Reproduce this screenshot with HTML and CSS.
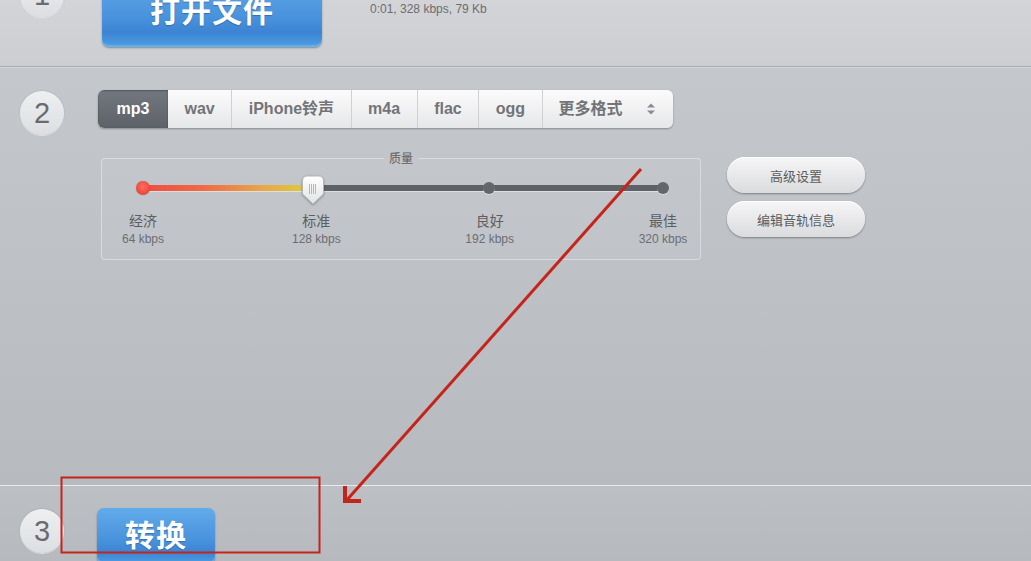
FILE: index.html
```html
<!DOCTYPE html>
<html lang="zh">
<head>
<meta charset="utf-8">
<title>音频转换器</title>
<link rel="stylesheet" href="styles.css">
</head>
<body>
<div class="page">
  <section class="sec sec1">
    <div class="row1">
      <div class="step">1</div>
      <button class="blue-btn open-btn">打开文件</button>
      <div class="info">0:01, 328 kbps, 79 Kb</div>
    </div>
  </section>

  <section class="sec sec2">
    <div class="step">2</div>
    <div class="content2">
      <div class="tabs">
        <div class="tab active">mp3</div>
        <div class="tab">wav</div>
        <div class="tab">iPhone铃声</div>
        <div class="tab">m4a</div>
        <div class="tab">flac</div>
        <div class="tab">ogg</div>
        <div class="tab more">更多格式
          <svg class="updown" width="10" height="14" viewBox="0 0 10 14"><path d="M1 5.5 L5 1.5 L9 5.5 Z M1 8.5 L5 12.5 L9 8.5 Z" fill="#8a8c90"/></svg>
        </div>
      </div>
      <div class="quality-row">
        <fieldset class="quality">
          <legend>质量</legend>
          <div class="slider">
            <div class="track"><div class="fill"></div></div>
            <span class="dot red" style="left:0%"></span>
            <span class="dot" style="left:66.5%"></span>
            <span class="dot" style="left:100%"></span>
            <svg class="thumb" style="left:170px" width="24" height="30" viewBox="0 0 24 30">
              <defs><linearGradient id="tg" x1="0" y1="0" x2="0" y2="1"><stop offset="0" stop-color="#ffffff"/><stop offset="1" stop-color="#e1e2e5"/></linearGradient></defs>
              <path d="M1.5 6 Q1.5 1 6.5 1 L17.5 1 Q22.5 1 22.5 6 L22.5 19 L12 29 L1.5 19 Z" fill="url(#tg)" stroke="#b4b6ba" stroke-width="1"/>
              <path d="M8.5 9 V19 M10.5 9 V19 M12.5 9 V19 M14.5 9 V19" stroke="#a6a8ac" stroke-width="0.8"/>
            </svg>
          </div>
          <div class="labels">
            <div class="lab"><div class="name">经济</div><div class="rate">64 kbps</div></div>
            <div class="lab"><div class="name">标准</div><div class="rate">128 kbps</div></div>
            <div class="lab"><div class="name">良好</div><div class="rate">192 kbps</div></div>
            <div class="lab"><div class="name">最佳</div><div class="rate">320 kbps</div></div>
          </div>
        </fieldset>
        <div class="side-btns">
          <button class="pill">高级设置</button>
          <button class="pill">编辑音轨信息</button>
        </div>
      </div>
    </div>
  </section>

  <section class="sec sec3">
    <div class="step">3</div>
    <button class="blue-btn convert-btn">转换</button>
  </section>

  <svg class="annot" width="1031" height="561" viewBox="0 0 1031 561">
    <line x1="641" y1="169" x2="346" y2="501" stroke="#c5241a" stroke-width="3"/>
    <polyline points="345,486 345,501 361,501" fill="none" stroke="#c5241a" stroke-width="4"/>
    <rect x="61.5" y="477.5" width="258" height="75" fill="none" stroke="#c5241a" stroke-width="2"/>
  </svg>
</div>
</body>
</html>
```

FILE: styles.css
```css
* { box-sizing: border-box; }
html, body { margin: 0; padding: 0; }
body {
  width: 1031px;
  height: 561px;
  overflow: hidden;
  font-family: "Liberation Sans", "Noto Sans CJK SC", sans-serif;
  background: #b8bbc0;
}
.page {
  position: relative;
  width: 1031px;
  height: 561px;
  overflow: hidden;
  display: flex;
  flex-direction: column;
}
.sec { flex: none; }

.step {
  flex: none;
  width: 44px;
  height: 44px;
  border-radius: 50%;
  background: linear-gradient(#eeeff1, #dcdee1);
  box-shadow: 0 1px 1px rgba(255,255,255,0.6), 0 0 2px rgba(0,0,0,0.18);
  color: #6a6b6e;
  font-size: 29px;
  line-height: 44px;
  text-align: center;
}

/* section 1 */
.sec1 {
  height: 67px;
  border-bottom: 1px solid #a7aaaf;
  background: linear-gradient(#d3d4d7, #cdced2);
  overflow: hidden;
}
.row1 {
  display: flex;
  align-items: flex-start;
  margin-top: -27px;
  padding-left: 20px;
}
.blue-btn {
  border: none;
  border-radius: 7px;
  color: #fff;
  font-family: "Liberation Sans", "Noto Sans CJK SC", sans-serif;
  font-weight: bold;
  font-size: 30px;
  letter-spacing: 1px;
  text-shadow: 0 1px 1px rgba(0,0,0,0.25);
  background: linear-gradient(#62abea 0%, #4a93dd 55%, #3c84d3 80%, #4f9fe3 100%);
  box-shadow: 0 1px 2px rgba(0,0,0,0.35), inset 0 -2px 1px rgba(120,190,245,0.6);
  padding: 0;
}
.open-btn {
  margin-left: 38px;
  margin-top: 4px;
  width: 220px;
  height: 70px;
  line-height: 68px;
}
.info {
  margin-left: 48px;
  margin-top: 29px;
  font-size: 12px;
  line-height: 14px;
  color: #6b6d70;
}

/* section 2 */
.sec2 {
  height: 419px;
  border-top: 1px solid #d5d7da;
  border-bottom: 1px solid #e9eaec;
  background: linear-gradient(#c4c7cc, #b7bbc0);
  display: flex;
  align-items: flex-start;
  padding: 22px 0 0 20px;
}
.sec2 .step { margin-top: 1px; }
.content2 {
  margin-left: 34px;
  display: flex;
  flex-direction: column;
}
.tabs {
  display: flex;
  height: 38px;
  border-radius: 6px;
  background: linear-gradient(#fbfbfb, #e6e7e9);
  box-shadow: 0 1px 2px rgba(0,0,0,0.3);
  width: max-content;
  overflow: hidden;
}
.tab {
  display: flex;
  align-items: center;
  justify-content: center;
  padding: 0 16.5px;
  font-size: 16px;
  font-weight: bold;
  color: #737477;
  border-left: 1px solid #cfd1d4;
  line-height: 38px;
}
.tab:first-child { border-left: none; }
.tab.active {
  width: 70px;
  padding: 0;
  color: #fff;
  background: linear-gradient(#737880, #5d6269);
  box-shadow: inset 0 1px 2px rgba(0,0,0,0.3);
}
.tab.active + .tab { border-left: none; }
.tab.more {
  padding: 0 17px 0 16px;
  gap: 23px;
}
.updown { display: block; }

.quality-row {
  display: flex;
  align-items: flex-start;
  margin-top: 23px;
}
.quality {
  margin: 0 0 0 3px;
  width: 600px;
  height: 109px;
  padding: 0;
  border: 1px solid rgba(235,237,240,0.55);
  border-radius: 4px;
  background: rgba(255,255,255,0.04);
  min-width: 0;
}
.quality legend {
  margin: 0 auto;
  padding: 0 5px;
  font-size: 12px;
  line-height: 14px;
  color: #5d5f62;
  font-family: "Noto Sans CJK SC", sans-serif;
}
.slider {
  position: relative;
  margin: 16px 0 0 41px;
  width: 520px;
  height: 14px;
}
.track {
  position: absolute;
  left: 0;
  right: 0;
  top: 4px;
  height: 6px;
  border-radius: 3px;
  background: #5e6166;
  box-shadow: 0 1px 0 rgba(255,255,255,0.45);
}
.fill {
  width: 33%;
  height: 100%;
  border-radius: 3px 0 0 3px;
  background: linear-gradient(90deg, #ef4c40 0%, #f06a45 35%, #e9a74a 70%, #d8d23a 100%);
}
.dot {
  position: absolute;
  top: 1px;
  width: 12px;
  height: 12px;
  margin-left: -6px;
  border-radius: 50%;
  background: #63666b;
  box-shadow: 0 1px 0 rgba(255,255,255,0.4);
}
.dot.red {
  top: 0;
  width: 14px;
  height: 14px;
  margin-left: -7px;
  background: radial-gradient(circle at 50% 40%, #ff6d5e, #e2372c);
  box-shadow: 0 0 1px rgba(0,0,0,0.4);
}
.thumb {
  position: absolute;
  top: -6px;
  margin-left: -12px;
  filter: drop-shadow(0 1px 1px rgba(0,0,0,0.3));
}
.labels {
  display: grid;
  grid-template-columns: repeat(4, 60px);
  justify-content: space-between;
  width: 580px;
  margin: 16px 0 0 11px;
  text-align: center;
}
.name {
  font-family: "Noto Sans CJK SC", sans-serif;
  font-size: 14px;
  line-height: 18px;
  color: #5c5e61;
}
.rate {
  font-size: 12px;
  line-height: 14px;
  margin-top: 3px;
  color: #6b6e72;
}
.side-btns {
  margin-left: 26px;
  margin-top: 6px;
  display: flex;
  flex-direction: column;
  gap: 8px;
}
.pill {
  width: 138px;
  height: 36px;
  border: none;
  border-radius: 18px;
  background: linear-gradient(#f6f6f7, #dadbdd);
  box-shadow: 0 1px 2px rgba(0,0,0,0.35), inset 0 1px 0 #fff;
  font-family: "Noto Sans CJK SC", sans-serif;
  font-size: 13px;
  color: #5a5c5f;
  padding: 0;
}

/* section 3 */
.sec3 {
  flex: 1;
  display: flex;
  align-items: flex-start;
  padding: 22px 0 0 20px;
  background: linear-gradient(#bcbfc4, #b6b9be);
}
.sec3 .step { margin-top: 1px; }
.convert-btn {
  margin-left: 33px;
  width: 118px;
  height: 56px;
  line-height: 54px;
}

.annot {
  position: absolute;
  left: 0;
  top: 0;
  pointer-events: none;
}
```
